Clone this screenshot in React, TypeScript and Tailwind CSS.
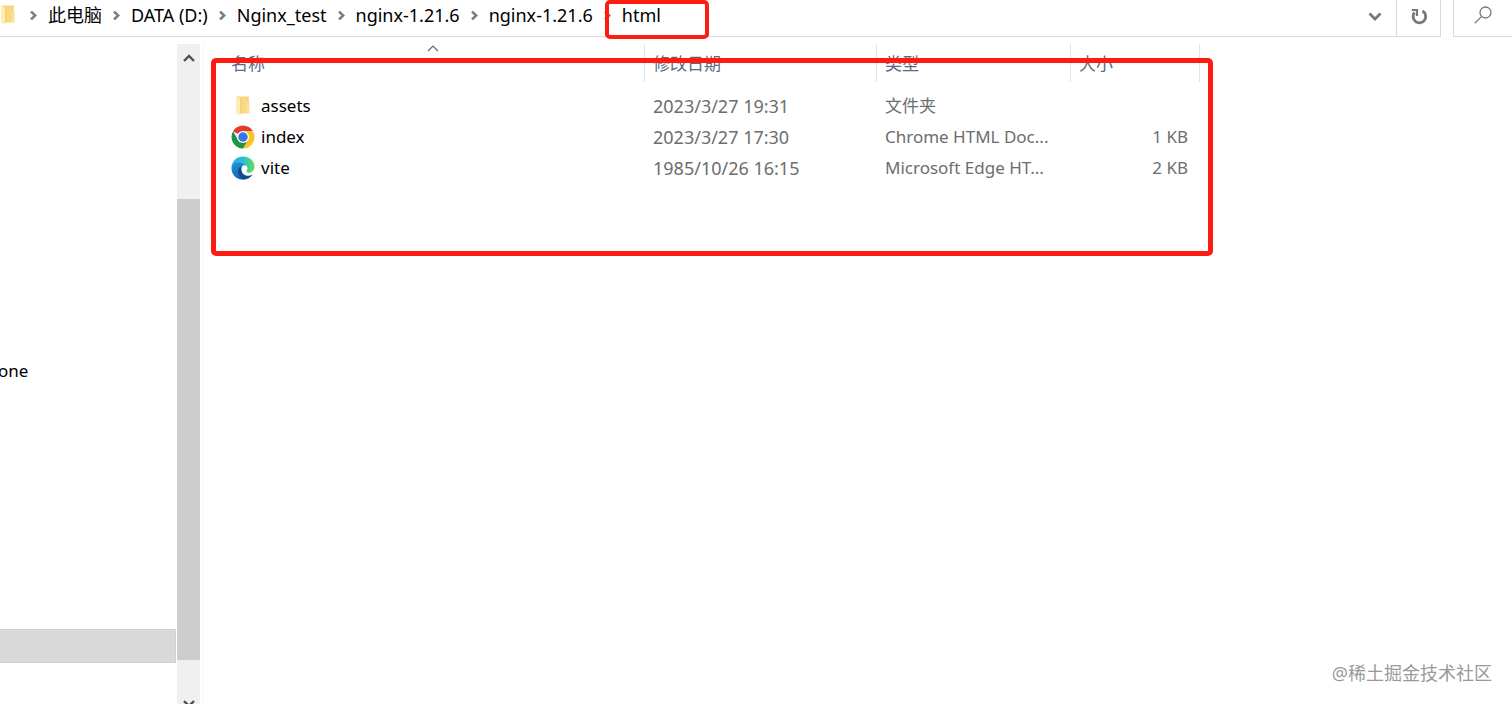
import React from 'react';

type FileRow = {
  name: string;
  icon: React.ReactNode;
  modified: string;
  type: string;
  size: string;
};

const ChevronIcon = ({ className }: { className?: string }) => (
  <svg viewBox="0 0 9 9" className={className} fill="none" stroke="currentColor" strokeWidth="2.5" aria-hidden="true">
    <path d="M2 0.5 6.2 4.5 2 8.5" />
  </svg>
);

const FolderIcon = ({ className }: { className?: string }) => (
  <svg viewBox="0 0 16 22" className={className} aria-hidden="true">
    <path d="M1.5 1.5h12.3v16.8H1.5z" fill="#f6d67b" />
    <path d="M11 7.5h3.6v11H11z" fill="#fbe29a" />
    <path d="M1 1.5l4.6 2.2v17L1 18.6z" fill="#fdeeb5" />
    <path d="M5.6 3.2l5.8-1.5v16.6H5.6z" fill="#f8d980" />
    <path d="M5.6 18.3V3.4" stroke="#e8c86c" strokeWidth="0.7" />
  </svg>
);

const ChromeIcon = () => (
  <svg viewBox="0 0 48 48" className="size-6 shrink-0" aria-hidden="true">
    <path d="M24 24 4.1 12.5A23 23 0 0 1 43.9 12.5H24z" fill="#e33b2e" />
    <path d="M24 12.5h19.9A23 23 0 0 1 24 47l10-17.3z" fill="#fcc31e" />
    <path d="M34 29.7 24 47A23 23 0 0 1 4.1 12.5L14 29.7z" fill="#229342" />
    <circle cx="24" cy="24" r="12" fill="#fff" />
    <circle cx="24" cy="24" r="9.5" fill="#3478e8" />
  </svg>
);

const EdgeIcon = () => (
  <svg viewBox="0 0 48 48" className="size-6 shrink-0" aria-hidden="true">
    <defs>
      <linearGradient id="edge-top" x1="0" y1="0.4" x2="1" y2="0.5">
        <stop offset="0" stopColor="#2aa7e3" />
        <stop offset="0.5" stopColor="#2cc0d4" />
        <stop offset="1" stopColor="#62dc55" />
      </linearGradient>
      <linearGradient id="edge-left" x1="0" y1="0" x2="0.4" y2="1">
        <stop offset="0" stopColor="#1f94dc" />
        <stop offset="1" stopColor="#1565b8" />
      </linearGradient>
    </defs>
    <path
      d="M1 23C1.5 10 12 1 24 1c13 0 23 9 23 20 0 8-6 13-13 13-5 0-7.5-2-7.5-3.5 0-1.2 2-2 2-5.500 0-5-5-9-12-9C9 16 3 19 1 23z"
      fill="url(#edge-top)"
    />
    <path
      d="M1 24c1-7 7.5-11 15-11 8 0 13.5 5 13.5 10.5L26 40l1 6.800C13 49 .5 38 1 24z"
      fill="url(#edge-left)"
    />
    <path
      d="M19 21c-4 3-5.500 8-4.500 13 2 8 8 13 12.500 13 7-.8 12.500-4.500 16-9.500.7-1-.2-1.800-1.200-1.300C32 41 21 35 19 21z"
      fill="#104a92"
    />
    <path
      d="M26 18.500c5 0 7.5 3 7 6.500-.3 3-2 4-2 5.500 0 2 3.500 3.500 7.500 3.500 3 0 5.500-1 7.500-2.500l-3 6c-3 1.500-6 2-9 2-7 0-13-5-13-12.500 0-5 1.500-8.500 5-8.500z"
      fill="#fff"
    />
  </svg>
);

const SortCaret = ({ className }: { className?: string }) => (
  <svg viewBox="0 0 12 7" className={className} fill="none" stroke="#666" strokeWidth="1.2" aria-hidden="true">
    <path d="M1 6 6 1l5 5" />
  </svg>
);

const ScrollArrow = ({ className }: { className?: string }) => (
  <svg viewBox="0 0 12 8" className={className} fill="none" stroke="#505050" strokeWidth="2.4" aria-hidden="true">
    <path d="M1 7 6 2l5 5" />
  </svg>
);

const crumbs = ['此电脑', 'DATA (D:)', 'Nginx_test', 'nginx-1.21.6', 'nginx-1.21.6', 'html'];

const files: FileRow[] = [
  {
    name: 'assets',
    icon: <FolderIcon className="mx-1 h-[22px] w-4 shrink-0" />,
    modified: '2023/3/27 19:31',
    type: '文件夹',
    size: '',
  },
  { name: 'index', icon: <ChromeIcon />, modified: '2023/3/27 17:30', type: 'Chrome HTML Doc...', size: '1 KB' },
  { name: 'vite', icon: <EdgeIcon />, modified: '1985/10/26 16:15', type: 'Microsoft Edge HT...', size: '2 KB' },
];

const AddressBar = () => {
  return (
    <header className="flex h-[37px] shrink-0">
      <div className="flex min-w-0 flex-1 border-r border-b border-[#d9d9d9]">
        <FolderIcon className="mt-1 h-[22px] w-4 shrink-0" />
        <nav aria-label="Path" className="flex h-[30px] min-w-0 flex-1 items-center pl-3 text-lg leading-6">
          {crumbs.map((crumb, i) => (
            <div key={i} className="relative flex items-center whitespace-nowrap">
              <ChevronIcon className="mr-[10px] ml-px size-[9px] text-[#7d7d7d]" />
              <a href="#" className="mr-[9px] text-black">
                {crumb}
              </a>
              {i === crumbs.length - 1 && (
                <div className="absolute -top-[3px] left-[3px] z-10 h-[39px] w-[104px] rounded-[5px] border-4 border-[#fe1b10]" />
              )}
            </div>
          ))}
        </nav>
        <button type="button" aria-label="Previous locations" className="flex w-[42px] justify-center pt-3">
          <svg viewBox="0 0 14 10" className="h-[10px] w-[14px]" fill="none" stroke="#777" strokeWidth="2.8">
            <path d="M1.5 1.5 7 7l5.5-5.5" />
          </svg>
        </button>
        <button type="button" aria-label="Refresh" className="flex w-11 justify-center border-l border-[#d9d9d9] pt-2">
          <svg viewBox="0 0 18 18" className="size-[18px]" fill="none" stroke="#777" strokeWidth="2.8">
            <path d="M12.5 3A6.300 6.300 0 1 1 4.500 4.500" />
            <path d="M1.800 2H7v6" strokeWidth="2.2" />
          </svg>
        </button>
      </div>
      <label className="ml-3 flex w-[59px] shrink-0 overflow-hidden border-b border-l border-[#d9d9d9] pl-5">
        <svg viewBox="0 0 18 18" className="mt-[6px] size-[18px] shrink-0" fill="none" stroke="#777" strokeWidth="1.3">
          <circle cx="11.5" cy="6.5" r="5.5" />
          <path d="M7.600 10.400.8 17.200" />
        </svg>
        <input
          type="search"
          aria-label="Search"
          placeholder="搜索"
          className="ml-[18px] h-[30px] w-0 flex-1 outline-none placeholder:text-[#6d6d6d]"
        />
      </label>
    </header>
  );
};

const Sidebar = () => {
  return (
    <aside className="flex w-[176px] shrink-0 flex-col justify-between pb-[41px]">
      <a href="#" className="mt-[310px] -ml-0.5 flex h-[34px] items-center text-black">
        one
      </a>
      <div className="h-[34px] border border-[#d0d0d0] border-l-transparent bg-[#d9d9d9]" />
    </aside>
  );
};

const Scrollbar = () => {
  return (
    <div className="ml-px flex w-[23px] shrink-0 flex-col overflow-hidden bg-[#f0f0f0]">
      <button type="button" aria-label="Scroll up" className="flex h-[27px] shrink-0 items-center justify-center">
        <ScrollArrow className="h-2 w-3" />
      </button>
      <div className="mt-32 flex-1 bg-[#cdcdcd]" />
      <div className="h-10 shrink-0" />
      <button type="button" aria-label="Scroll down" className="flex h-1 shrink-0 items-start justify-center">
        <ScrollArrow className="h-2 w-3 shrink-0 rotate-180" />
      </button>
    </div>
  );
};

const FileTable = () => {
  return (
    <table className="w-[996px] table-fixed border-separate border-spacing-0 text-left text-[#6d6d6d]">
      <thead>
        <tr className="h-[38px] text-[#5a6a82]">
          <th className="relative w-[441px] border-r border-[#e2e2e2] pt-0.5 pl-[27px] font-normal">
            <SortCaret className="absolute top-px left-[223px] h-[7px] w-3" />
            <button type="button">名称</button>
          </th>
          <th className="w-[232px] border-r border-[#e2e2e2] pt-0.5 pl-2 font-normal">
            <button type="button">修改日期</button>
          </th>
          <th className="w-[194px] border-r border-[#e2e2e2] pt-0.5 pl-2 font-normal">
            <button type="button">类型</button>
          </th>
          <th className="border-r border-[#e2e2e2] pt-0.5 pl-2 font-normal">
            <button type="button">大小</button>
          </th>
        </tr>
      </thead>
      <tbody className="before:block before:h-2 before:content-['']">
        {files.map((file) => (
          <tr key={file.name} className="h-[31px]">
            <td className="pl-[27px]">
              <div className="flex items-center gap-[6px] text-black">
                {file.icon}
                {file.name}
              </div>
            </td>
            <td className="pl-2 text-lg leading-6 whitespace-nowrap">{file.modified}</td>
            <td className="pl-2 whitespace-nowrap">{file.type}</td>
            <td className="pr-3 text-right whitespace-nowrap">{file.size}</td>
          </tr>
        ))}
      </tbody>
    </table>
  );
};

export default function App() {
  return (
    <div className="relative flex h-screen flex-col overflow-hidden bg-white font-['Noto_Sans','Noto_Sans_CJK_SC',sans-serif] text-[17px] leading-6">
      <AddressBar />
      <div className="flex min-h-0 flex-1 pt-[7px]">
        <Sidebar />
        <Scrollbar />
        <main className="relative ml-[3px] min-w-0 flex-1 border-l border-[#f6f6f6]">
          <FileTable />
          <div className="pointer-events-none absolute top-[14px] left-[7px] h-[198px] w-[1002px] rounded-[5px] border-[5px] border-[#fe1b10]" />
        </main>
      </div>
      <p className="absolute right-5 bottom-[19px] text-lg leading-6 text-[#999]">@稀土掘金技术社区</p>
    </div>
  );
}
